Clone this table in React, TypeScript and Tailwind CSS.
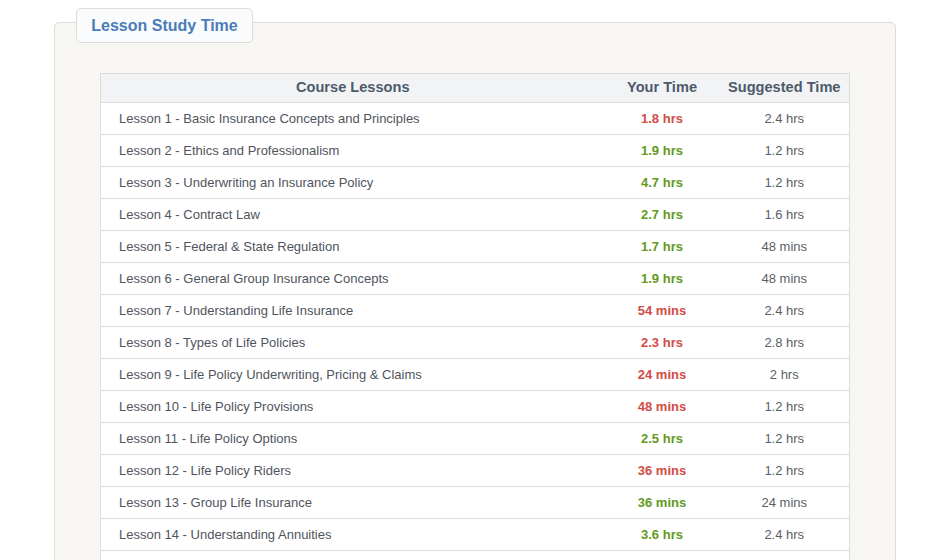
type Lesson = { name: string; yours: string; good: boolean; suggested: string };

const LESSONS: Lesson[] = [
  { name: 'Lesson 1 - Basic Insurance Concepts and Principles', yours: '1.8 hrs', good: false, suggested: '2.4 hrs' },
  { name: 'Lesson 2 - Ethics and Professionalism', yours: '1.9 hrs', good: true, suggested: '1.2 hrs' },
  { name: 'Lesson 3 - Underwriting an Insurance Policy', yours: '4.7 hrs', good: true, suggested: '1.2 hrs' },
  { name: 'Lesson 4 - Contract Law', yours: '2.7 hrs', good: true, suggested: '1.6 hrs' },
  { name: 'Lesson 5 - Federal & State Regulation', yours: '1.7 hrs', good: true, suggested: '48 mins' },
  { name: 'Lesson 6 - General Group Insurance Concepts', yours: '1.9 hrs', good: true, suggested: '48 mins' },
  { name: 'Lesson 7 - Understanding Life Insurance', yours: '54 mins', good: false, suggested: '2.4 hrs' },
  { name: 'Lesson 8 - Types of Life Policies', yours: '2.3 hrs', good: false, suggested: '2.8 hrs' },
  { name: 'Lesson 9 - Life Policy Underwriting, Pricing & Claims', yours: '24 mins', good: false, suggested: '2 hrs' },
  { name: 'Lesson 10 - Life Policy Provisions', yours: '48 mins', good: false, suggested: '1.2 hrs' },
  { name: 'Lesson 11 - Life Policy Options', yours: '2.5 hrs', good: true, suggested: '1.2 hrs' },
  { name: 'Lesson 12 - Life Policy Riders', yours: '36 mins', good: false, suggested: '1.2 hrs' },
  { name: 'Lesson 13 - Group Life Insurance', yours: '36 mins', good: true, suggested: '24 mins' },
  { name: 'Lesson 14 - Understanding Annuities', yours: '3.6 hrs', good: true, suggested: '2.4 hrs' },
];

const App = () => {
  return (
    <div className="min-h-[560px] bg-white pt-[22px] font-['Liberation_Sans',Arial,sans-serif]">
      <div className="relative ml-[54px] w-[842px] rounded-[5px] border border-[#dcdcdc] bg-[#f7f6f3] pt-[50px] pb-10">
        {/* fieldset-style legend */}
        <div className="absolute left-[21px] top-[-15px] flex h-[35px] w-[177px] items-center justify-center rounded-[5px] border border-[#dcdcdc] bg-[#fafbfd]">
          <span className="text-[16px] font-bold text-[#4a7cb8]">Lesson Study Time</span>
        </div>

        <table className="ml-[45px] w-[750px] border-collapse border border-[#dcdcdc] bg-white text-[13px]">
          <thead>
            <tr className="h-[29px] bg-[#f2f3f5] text-[14.6px] font-bold text-[#4d5a6b]">
              <th className="w-[504px] border-b border-[#dcdcdc] font-bold">Course Lessons</th>
              <th className="w-[115px] border-b border-[#dcdcdc] font-bold">Your Time</th>
              <th className="border-b border-[#dcdcdc] font-bold">Suggested Time</th>
            </tr>
          </thead>
          <tbody>
            {LESSONS.map((l) => (
              <tr key={l.name} className="h-[32px] border-b border-[#dcdcdc]">
                <td className="pl-[18px] text-[#50545d]">{l.name}</td>
                <td className={l.good ? 'text-center font-bold text-[#639a1e]' : 'text-center font-bold text-[#d34b46]'}>
                  {l.yours}
                </td>
                <td className="text-center text-[#5a5f66]">{l.suggested}</td>
              </tr>
            ))}
            <tr className="h-[32px]">
              <td colSpan={3} />
            </tr>
          </tbody>
        </table>
      </div>
    </div>
  );
};

export default App;
